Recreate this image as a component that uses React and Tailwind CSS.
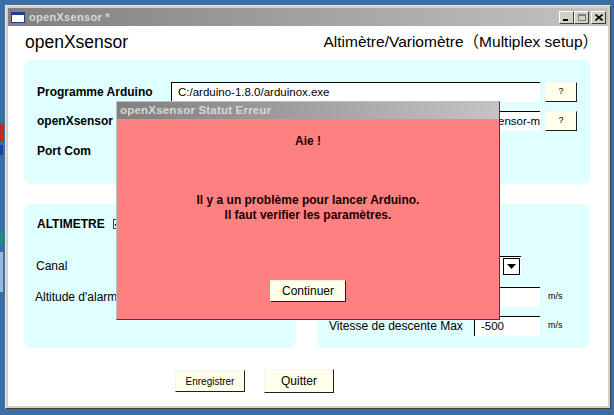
import { Check } from 'lucide-react';

const SANS = { fontFamily: '"Liberation Sans", Arial, "Noto Sans CJK SC", sans-serif' };

function Field({ width, children, className = '' }) {
  return (
    <div
      className={`h-[20px] bg-white border-t border-l border-black overflow-hidden whitespace-nowrap flex items-center pl-[6px] text-[11.5px] text-black ${className}`}
      style={{ width }}
    >
      {children}
    </div>
  );
}

function RaisedButton({ className = '', children }) {
  return (
    <div
      className={`bg-[#ffffea] border-r border-b border-[#202020] border-t border-l border-t-[#f4f4f4] border-l-[#f4f4f4] flex items-center justify-center text-black ${className}`}
    >
      {children}
    </div>
  );
}

function WinButton({ children, className = '' }) {
  return (
    <div
      className={`w-[15px] h-[13px] bg-[#d4d0c8] border border-t-white border-l-white border-r-[#404040] border-b-[#404040] flex items-center justify-center ${className}`}
    >
      {children}
    </div>
  );
}

export default function App() {
  return (
    <div className="relative w-[614px] h-[415px] overflow-hidden bg-[#3a6ea5] pl-[5px] pt-[5px]" style={SANS}>
      {/* desktop icons peeking out */}
      <div className="absolute left-0 top-[123px] w-[4px] h-[19px] bg-[#c8281e]" />
      <div className="absolute left-0 top-[145px] w-[3px] h-[10px] bg-[#1b3f9a]" />
      <div className="absolute left-0 top-[232px] w-[3px] h-[12px] bg-[#1f8f7a]" />
      <div className="absolute left-0 top-[252px] w-[3px] h-[40px] bg-[#9fb8da]" />

      {/* main window */}
      <div className="w-[606px] h-[404px] bg-[#d4d0c8] border border-t-[#e8e8e8] border-l-[#e8e8e8] border-r-[#404040] border-b-[#404040] p-[2px] flex flex-col">
        {/* title bar */}
        <div className="h-[18px] flex items-center pl-[3px] pr-[2px] bg-gradient-to-r from-[#808080] to-[#c4c4c4]">
          <div className="w-[14px] h-[11px] bg-white border border-[#1c3e8c] border-t-[3px] mr-[4px]" />
          <span className="text-[11px] font-bold text-[#d8d8d8] tracking-[0.3px]">openXsensor *</span>
          <div className="ml-auto flex items-center">
            <WinButton>
              <div className="w-[5px] h-[2px] bg-black mt-[6px] -ml-[2px]" />
            </WinButton>
            <WinButton>
              <div className="w-[8px] h-[7px] border border-[#808080] border-t-2" />
            </WinButton>
            <WinButton className="ml-[2px]">
              <svg width="8" height="7" viewBox="0 0 8 7">
                <path d="M0.5 0.5 L7.5 6.5 M7.5 0.5 L0.5 6.5" stroke="black" strokeWidth="1.6" />
              </svg>
            </WinButton>
          </div>
        </div>

        {/* client area */}
        <div className="flex-1 bg-white flex flex-col">
          <div className="h-[34px] flex items-start justify-between pl-[17px] pr-[10px] pt-[6px]">
            <span className="text-[17.5px] leading-[20px] text-black">openXsensor</span>
            <span className="text-[15.5px] leading-[20px] text-black">Altimètre/Variomètre（Multiplex setup）</span>
          </div>

          {/* Arduino panel */}
          <div className="ml-[16px] w-[566px] h-[124px] bg-[#e0ffff] rounded-[6px] pt-[22px] pl-[13px] flex flex-col gap-[9px]">
            <div className="flex items-center h-[20px]">
              <span className="w-[134px] text-[12px] font-bold">Programme Arduino</span>
              <Field width={369}>C:/arduino-1.8.0/arduinox.exe</Field>
              <RaisedButton className="ml-[5px] w-[32px] h-[20px] text-[9px]">?</RaisedButton>
            </div>
            <div className="flex items-center h-[20px]">
              <span className="w-[134px] text-[12px] font-bold">openXsensor</span>
              <Field width={369}>
                <div className="w-[398px] shrink-0 text-right">openXsensor-multiplex</div>
              </Field>
              <RaisedButton className="ml-[5px] w-[32px] h-[20px] text-[9px]">?</RaisedButton>
            </div>
            <div className="flex items-center h-[20px] mt-[1px]">
              <span className="w-[134px] text-[12px] font-bold">Port Com</span>
              <Field width={100}>COM3</Field>
            </div>
          </div>

          <div className="ml-[16px] mt-[20px] flex gap-[21px]">
            {/* altimeter */}
            <div className="w-[272px] h-[144px] bg-[#e0ffff] rounded-[6px] pt-[10px] pl-[13px] flex flex-col">
              <div className="h-[20px] flex items-center">
                <span className="text-[12px] font-bold">ALTIMETRE</span>
                <div className="ml-[8px] w-[10px] h-[10px] bg-white border border-[#404040] flex items-center justify-center">
                  <Check size={9} strokeWidth={4} color="black" />
                </div>
              </div>
              <div className="h-[20px] mt-[22px] flex items-center">
                <span className="text-[12px] -ml-[1px]">Canal</span>
              </div>
              <div className="h-[20px] mt-[11px] flex items-center">
                <span className="text-[12px] -ml-[2px]">Altitude d'alarme</span>
              </div>
            </div>

            {/* vario */}
            <div className="w-[272px] h-[144px] bg-[#e0ffff] rounded-[6px] pt-[10px] pl-[12px] flex flex-col">
              <div className="h-[20px] flex items-center">
                <span className="text-[12px] font-bold">VARIOMETRE</span>
              </div>
              <div className="h-[20px] mt-[22px] flex items-center">
                <span className="w-[145px] text-[12px]">Canal</span>
                <div className="w-[47px] h-[20px] bg-white border-t border-l border-black flex justify-end items-center pr-[1px]">
                  <div className="w-[17px] h-[17px] bg-white border border-black flex items-center justify-center">
                    <svg width="9" height="5" viewBox="0 0 9 5">
                      <path d="M0 0 H9 L4.5 5 Z" fill="black" />
                    </svg>
                  </div>
                </div>
              </div>
              <div className="h-[20px] mt-[11px] flex items-center">
                <span className="w-[145px] text-[12px]">Vitesse de montée Max</span>
                <Field width={66}>500</Field>
                <span className="ml-[8px] text-[9px]">m/s</span>
              </div>
              <div className="h-[20px] mt-[9px] flex items-center">
                <span className="w-[145px] text-[12px]">Vitesse de descente Max</span>
                <Field width={66}>-500</Field>
                <span className="ml-[8px] text-[9px]">m/s</span>
              </div>
            </div>
          </div>

          <div className="ml-[167px] mt-[21px] flex items-center gap-[19px]">
            <RaisedButton className="w-[70px] h-[22px] text-[10px]">Enregistrer</RaisedButton>
            <RaisedButton className="w-[70px] h-[24px] text-[12px]">Quitter</RaisedButton>
          </div>
        </div>
      </div>

      {/* error dialog */}
      <div className="absolute left-[116px] top-[101px] w-[384px] h-[219px] bg-[#d4d0c8] border border-t-[#c0c0c0] border-l-[#c0c0c0] border-r-[#404040] border-b-[#404040] flex flex-col">
        <div className="h-[17px] flex items-center pl-[3px] bg-gradient-to-r from-[#808080] to-[#c4c4c4]">
          <span className="text-[11.5px] font-bold text-[#d8d8d8] tracking-[0.2px]">openXsensor Statut Erreur</span>
        </div>
        <div className="flex-1 bg-[#ff8080] flex flex-col items-center pt-[14px] text-[#1a0000]">
          <div className="h-[16px] text-[12px] font-bold leading-[16px]">Aie !</div>
          <div className="mt-[44px] text-[12px] font-bold leading-[15px] text-center">
            <div>Il y a un problème pour lancer Arduino.</div>
            <div>Il faut verifier les paramètres.</div>
          </div>
          <RaisedButton className="mt-[57px] w-[76px] h-[22px] text-[12px]">Continuer</RaisedButton>
        </div>
      </div>
    </div>
  );
}
